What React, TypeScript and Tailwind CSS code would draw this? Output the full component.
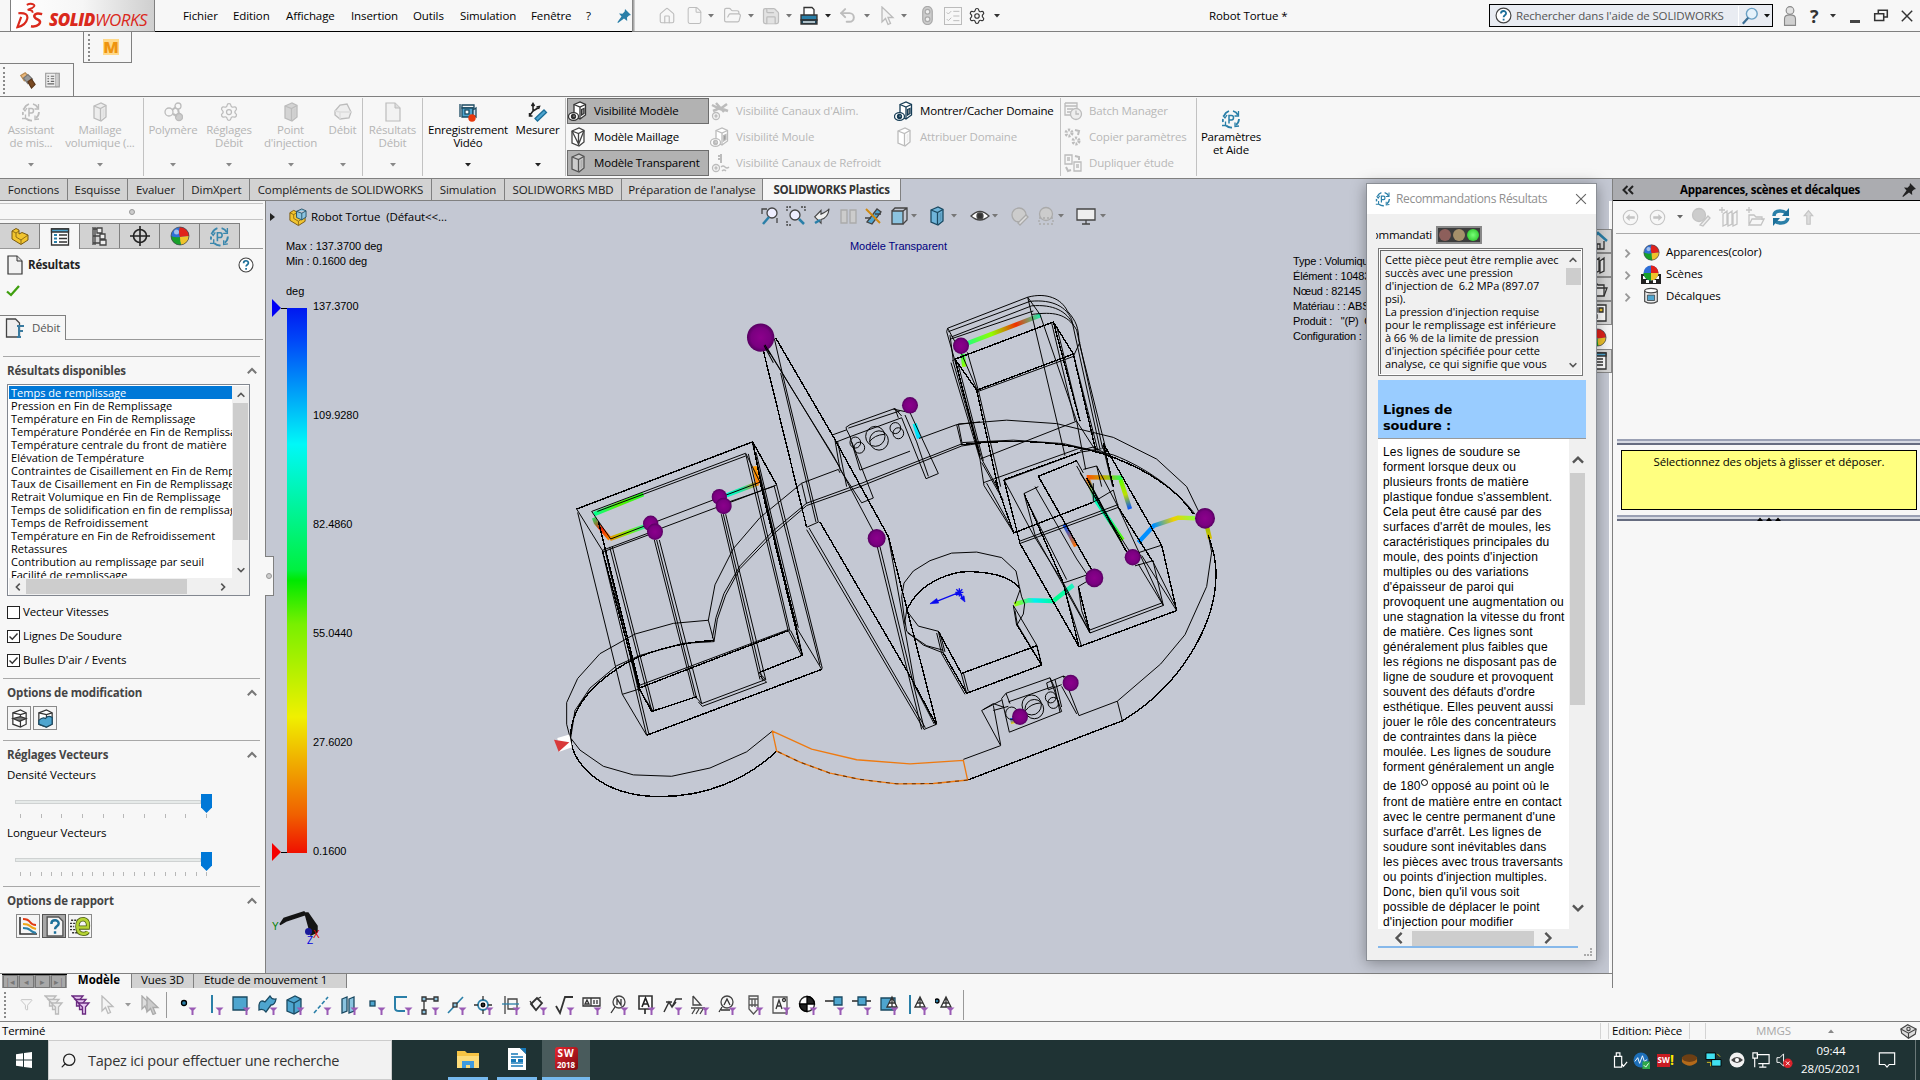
import React from "react";
import { Home, File, FolderOpen, Save, Undo2, MousePointer2, Settings, Search, ListChecks, Filter } from "lucide-react";

type P = { children?: React.ReactNode; className?: string };

/* ---------- small drawing helpers ---------- */
const Ic = ({ children, className = "" }: P) => (
  <svg viewBox="0 0 20 20" className={"shrink-0 " + (/size-|w-\[/.test(className) ? "" : "size-5 ") + className} fill="none" stroke="currentColor" strokeWidth="1.3">
    {children}
  </svg>
);
const Caret = ({ className = "text-[#444]" }: P) => (
  <svg viewBox="0 0 6 4" className={"w-[6px] h-[4px] shrink-0 " + className}>
    <path d="M0 0h6L3 3.6z" fill="currentColor" />
  </svg>
);
const Chev = ({ className = "" }: P) => (
  <svg viewBox="0 0 10 10" className={"shrink-0 " + (/size-/.test(className) ? "" : "size-[10px] ") + className} fill="none" stroke="currentColor" strokeWidth="2">
    <path d="M0.8 7.2 5 3l4.2 4.2" />
  </svg>
);
const Ball = ({ className = "size-[18px]" }: P) => (
  <svg viewBox="0 0 20 20" className={"shrink-0 " + className}>
    <circle cx="10" cy="10" r="9" fill="#2f6fd6" />
    <path d="M10 1q-2 5 0 10l9-1a9 9 0 0 0-9-9z" fill="#e0221b" />
    <path d="M19 10a9 9 0 0 1-8 9q-2-4-1-8z" fill="#efc32b" />
    <path d="M1 10q4 2 9 1 0 4 1 8A9 9 0 0 1 1 10z" fill="#18a02a" />
    <circle cx="6.5" cy="6" r="2.5" fill="#fff" opacity=".55" />
    <circle cx="10" cy="10" r="9" fill="none" stroke="#444" strokeWidth=".7" />
  </svg>
);
const CycleP = ({ className = "size-[18px] text-[#2a7fa8]" }: P) => (
  <Ic className={className}>
    <path d="M3 7a8 8 0 0 1 5-5M12 2a8 8 0 0 1 5 4M18 10a8 8 0 0 1-3 6M11 18.500a8 8 0 0 1-6-2M2 13a8 8 0 0 1 0-3" strokeWidth="1.8" />
    <path d="M17.500 2v5h-4M2 6.500 4 9l2-3M18 17l-4 .5V13.500M4.500 12.500v4l-3.500 0" strokeWidth="1.3" />
    <path d="M8 14.500v-8h2.500q2 0 2 2.200t-2 2.200H8" strokeWidth="1.5" />
  </Ic>
);
const Cube = ({ className = "size-[18px] text-[#333]", fill = "#fff" }: P & { fill?: string }) => (
  <Ic className={className}>
    <path d="M4 4 11 1 16 3.500v11.500l-5 4L4 16z" fill={fill} />
    <path d="M4 4l6.500 2.500L16 3.500M10.500 6.500v12" />
    <path d="M12.500 7.500l2-1.200v8l-2 1.700z" fill="currentColor" opacity=".25" stroke="none" />
  </Ic>
);
const MeshCube = ({ className = "size-[20px] text-[#333]" }: P) => (
  <Ic className={className}>
    <path d="M4 4 11 1 16 3.500v11.500l-5 4L4 16z" fill="#fff" />
    <path d="M4 4l6.500 2.500L16 3.500M10.500 6.500v12M4 4l6.500 13M16 3.500l-5.500 14" />
  </Ic>
);
const CubeEye = ({ className = "size-[20px] text-[#333]", fill = "#fff" }: P & { fill?: string }) => (
  <Ic className={className}>
    <path d="M6 3.500 12 1l5.500 2.500V14L12 18 6 15z" fill={fill} />
    <path d="M6 3.500l6 2.500 5.500-2.500M12 6v12" />
    <path d="M13.500 8.500 16 7.500v5l-2.500 1.500z" fill="#999" />
    <ellipse cx="5.500" cy="15.500" rx="5" ry="3.800" fill="#fff" />
    <circle cx="5.500" cy="15.500" r="2" fill="currentColor" />
    <circle cx="6" cy="15" r=".6" fill="#fff" stroke="none" />
  </Ic>
);
const GearI = ({ className = "size-[20px]" }: P) => <Settings className={"shrink-0 " + className} strokeWidth={1.5} />;
const HelpI = ({ className = "size-[16px]" }: P) => (
  <svg viewBox="0 0 16 16" className={"shrink-0 " + className}>
    <circle cx="8" cy="8" r="7" fill="#fff" stroke="#444" strokeWidth="1.1" />
    <path d="M5.600 6.200c0-3.200 4.800-3.200 4.800-.2 0 1.800-2.300 1.700-2.300 3.600M8.100 11v1.700" fill="none" stroke="#1c6f99" strokeWidth="1.7" />
  </svg>
);
const Part = ({ className = "size-[20px]", blue }: P & { blue?: boolean }) => (
  <svg viewBox="0 0 20 20" className={"shrink-0 " + className}>
    <path d="M2 5 6 2.500 9 4v4l3-1.500L18 9v5l-7 4.500L2 13z" fill="#f2c52f" stroke="#7a5a10" strokeWidth="1" />
    <path d="M2 5l4 2v4l5 3 7-5M11 14v4M6 7l3-2" fill="none" stroke="#7a5a10" strokeWidth=".8" />
    {blue && <path d="M9 3.500 14.500 1 19 3v6.500l-4.500 3L9 10zM9 3.500l5.500 2L19 3M14.500 5.500v7" fill="#8cc4e0" stroke="#1b4a62" strokeWidth=".9" />}
  </svg>
);
const Page = ({ className = "size-[20px]" }: P) => (
  <svg viewBox="0 0 20 20" className={"shrink-0 " + className}>
    <path d="M3 1h9l5 5v13H3z" fill="#f2f2f2" stroke="currentColor" strokeWidth="1.200" />
    <path d="M12 1v5h5" fill="#ddd" stroke="currentColor" />
  </svg>
);
const Pin = ({ className = "" }: P) => (
  <svg viewBox="0 0 14 14" className={"size-[14px] shrink-0 " + className}>
    <path d="M8 0l6 6-2 .4-2 2.200.2 3.400L7 9.500 1 14l-.6-.8L4.500 7.500 2 4.500l3.500.2L7.700 2.500z" fill="currentColor" />
  </svg>
);

/* ---------- title bar ---------- */
const menus: [string, string][] = [
  ["Fichier", "w-[50px]"], ["Edition", "w-[53px]"], ["Affichage", "w-[65px]"], ["Insertion", "w-[62px]"],
  ["Outils", "w-[47px]"], ["Simulation", "w-[71px]"], ["Fenêtre", "w-[55px]"], ["?", "w-[31px]"],
];
function TitleBar() {
  return (
    <div className="h-[32px] flex shrink-0 border-b border-[#808080]">
      <div className="w-[10px] h-[32px] border-b border-[#808080]" />
      <div className="w-[145px] h-[32px] border-x border-b border-[#808080] bg-linear-to-r from-white via-[#f6f6f6] to-[#cfcfcf] flex items-center pl-[5px]">
        <svg viewBox="0 0 30 30" className="w-[29px] h-[28px]" fill="none" stroke="#da291c" strokeWidth="2.300">
          <path d="M11 3q4-2 7-.5t-1.500 4L12 8.500q6 0 5 3" strokeWidth="2" />
          <path d="M2 12q11-1 9.500 6Q10 25 1 27l4-11" />
          <path d="M27.500 13q-8-2-8.500 2 0 2 4 4t1 5q-3 3-8.500 2" strokeWidth="2.700" />
        </svg>
        <span className="ml-[4px] text-[17px] leading-none italic text-[#da291c] font-['Open_Sans',sans-serif] tracking-[-0.500px] mt-[8px]">
          <b className="font-extrabold">SOLID</b>WORKS
        </span>
      </div>
      <div className="w-[477px] h-[32px] flex items-center pl-[28px] border-b border-black">
        {menus.map(([m, w]) => <span key={m} className={w}>{m}</span>)}
        <Pin className="text-[#2a7fa8]" />
      </div>
      <div className="w-[3px] bg-linear-to-r from-[#777] to-[#ddd]" />
      <div className="flex items-center text-[#bdbdbd] pl-[23px]">
        <span className="w-[27px]"><Home className="size-[18px]" strokeWidth={1.500} /></span>
        <span className="w-[23px]"><File className="size-[19px]" strokeWidth={1.300} /></span>
        <span className="w-[15px]"><Caret className="text-[#777]" /></span>
        <span className="w-[25px]"><FolderOpen className="size-[19px]" strokeWidth={1.500} /></span>
        <span className="w-[13px]"><Caret className="text-[#777]" /></span>
        <span className="w-[25px]"><Save className="size-[20px] fill-[#e2e2e2]" strokeWidth={1.500} /></span>
        <span className="w-[13px]"><Caret className="text-[#777]" /></span>
        <span className="w-[26px]">
          <Ic className="size-[20px] text-[#333]">
            <path d="M5 9V1.500h8l2 2V9" fill="#fff" />
            <path d="M2 9h16v5H2z" fill="#2a7fa8" />
            <path d="M2 14h16v4H2z" fill="#1b4a62" />
            <path d="M4 16h12" stroke="#fff" />
          </Ic>
        </span>
        <span className="w-[13px]"><Caret className="text-[#222]" /></span>
        <span className="w-[26px]"><Undo2 className="size-[19px]" strokeWidth={2.500} /></span>
        <span className="w-[13px]"><Caret className="text-[#777]" /></span>
        <span className="w-[24px]">
          <Ic className="size-[20px] text-[#bbb]"><path d="M5 1v15l3.500-3.500 2.500 6 2.500-1-2.500-6H16z" fill="#f4f4f4" /></Ic>
        </span>
        <span className="w-[17px]"><Caret className="text-[#777]" /></span>
        <span className="w-[26px]">
          <Ic className="size-[19px] text-[#aaa]"><rect x="5" y="0.500" width="10" height="19" rx="5" fill="#ccc" /><circle cx="10" cy="6" r="2.500" fill="#eee" /><circle cx="10" cy="14" r="2.500" fill="#eee" /></Ic>
        </span>
        <span className="w-[24px]"><ListChecks className="size-[18px] border border-[#bbb]" strokeWidth={1.500} /></span>
        <span className="w-[26px]"><GearI className="size-[18px] text-[#333]" /></span>
        <Caret className="text-[#333]" />
      </div>
      <div className="ml-auto flex items-center">
        <span className="w-[280px]">Robot Tortue *</span>
        <div className="w-[284px] h-[23px] border border-black bg-[#e9ecf2] flex items-center pl-[5px] text-[#555]">
          <HelpI className="size-[17px]" />
          <span className="ml-[4px] w-[222px] tracking-[-0.160px]">Rechercher dans l'aide de SOLIDWORKS</span>
          <div className="h-[20px] w-px bg-white" />
          <Ic className="size-[18px] ml-[2px] text-[#666]"><circle cx="12" cy="7.500" r="6" fill="#e6f2fb" stroke="#6aa0c4" strokeWidth="1.600" /><path d="M8 12l-6 6.500" stroke="#3c6e94" strokeWidth="2.500" /></Ic>
          <Caret className="ml-[5px] text-[#111]" />
        </div>
        <Ic className="size-[22px] ml-[6px] text-[#888]"><circle cx="10" cy="5" r="3.500" fill="#e2e2e2" strokeWidth="1" /><path d="M5 18.500v-6q0-3.500 5-3.500t5 3.500v6z" fill="#d0d0d0" strokeWidth="1" /></Ic>
        <b className="ml-[9px] w-[20px] text-[18px] text-[#333] leading-none">?</b>
        <Caret className="text-[#333]" />
        <div className="ml-[14px] mt-[12px] w-[10px] h-[3px] bg-[#444]" />
        <Ic className="size-[18px] ml-[12px] text-[#333]"><path d="M7 7V3.500h10V11h-4M3 7.500h10V15H3z" strokeWidth="1.700" /></Ic>
        <Ic className="size-[16px] ml-[9px] mr-[5px] text-[#333]"><path d="M3.500 3.500l13 13M16.500 3.500l-13 13" strokeWidth="1.800" /></Ic>
      </div>
    </div>
  );
}
const Grip = ({ className = "" }: P) => (
  <div className={"w-[3px] border-l-2 border-dotted border-[#8a8a8a] shrink-0 " + className} />
);
function ExtraBars() {
  return (
    <>
      <div className="h-[32px] pl-[83px] flex shrink-0">
        <div className="w-[49px] h-[31px] border border-t-0 border-[#808080] flex items-center pl-[4px]">
          <Grip className="h-[27px]" />
          <div className="ml-[12px] size-[16px] bg-[#ffd98a] text-[#ee9410] font-extrabold text-[16px] leading-[16px] text-center">M</div>
        </div>
      </div>
      <div className="h-[33px] flex shrink-0 border-b border-[#808080]">
        <div className="w-[74px] h-[33px] -mt-px border-t border-r border-[#808080] flex items-center pl-[3px]">
          <Grip className="h-[27px]" />
          <Ic className="size-[18px] ml-[12px]"><path d="M3 5l5-3 4 4-5 5z" fill="#e8b67a" stroke="#b98a50" /><path d="M6 8l5-4 5 5-5 5z" fill="#9a9a9a" stroke="#777" /><path d="M11 12l4-3 4 6-4 4z" fill="#7a4a22" stroke="#5a3618" /></Ic>
          <Ic className="size-[17px] ml-[8px] text-[#999]"><path d="M2 1.500h12v16H2z" fill="#eee" /><path d="M14 1.500h4v16h-4" fill="#ccc" /><path d="M4 5h2M8 5h4M4 8h2M8 8h4M4 11h2M8 11h4M4 14h8" stroke="#666" /></Ic>
        </div>
      </div>
    </>
  );
}

/* ---------- ribbon ---------- */
function BigBtn({ w, icon, a, b, dim = true, caret = true }: { w: string; icon: React.ReactNode; a: string; b?: string; dim?: boolean; caret?: boolean }) {
  return (
    <div className={"flex flex-col items-center shrink-0 tracking-[-0.200px] " + w + (dim ? " text-[#b5b5b5]" : " text-black")}>
      <div className="h-[20px] mt-[5px] flex items-center">{icon}</div>
      <div className="h-[13px] mt-[1px] leading-[13px]">{a}</div>
      <div className="h-[13px] leading-[13px]">{b}</div>
      {caret && <Caret className={"mt-[14px] " + (dim ? "text-[#888]" : "text-[#222]")} />}
    </div>
  );
}
function Row({ icon, t, mode = "dim" }: { icon: React.ReactNode; t: string; mode?: "dim" | "on" | "off" }) {
  return (
    <div className={"h-[26px] flex items-center gap-[6px] border tracking-[-0.180px] " + (mode === "on" ? "bg-[#b2b2b2] border-[#6d6d6d] text-black" : mode === "off" ? "border-transparent text-black" : "border-transparent text-[#b8b8b8]")}>
      {icon}<span>{t}</span>
    </div>
  );
}
const Sep = () => <div className="w-px h-[78px] bg-[#c2c2c2] mt-px shrink-0" />;
const dimI = "size-[20px] text-[#bcbcbc]";
function Ribbon() {
  return (
    <div className="h-[82px] shrink-0 flex border-b border-[#808080]">
      <BigBtn w="w-[62px]" icon={<CycleP className="size-[20px] text-[#bcbcbc]" />} a="Assistant" b="de mis..." />
      <BigBtn w="w-[76px]" icon={<Cube className={dimI} fill="#ededed" />} a="Maillage" b="volumique (..." />
      <div className="w-[5px]" /><Sep />
      <BigBtn w="w-[58px]" icon={<Ic className={dimI}><circle cx="6" cy="10" r="4" /><circle cx="15" cy="4" r="3" /><circle cx="16" cy="15" r="3.500" fill="#ccc" /><path d="M9 8l4-3M10 12l4 2M15 7l1 5" strokeWidth="2" /></Ic>} a="Polymère" />
      <BigBtn w="w-[54px]" icon={<GearI className={dimI} />} a="Réglages" b="Débit" />
      <BigBtn w="w-[69px]" icon={<Cube className={dimI} fill="#d4d4d4" />} a="Point" b="d'injection" />
      <BigBtn w="w-[35px]" icon={<Ic className={dimI}><path d="M2 9 7 3l7-1 4 8-2 6-9 1-5-4z" fill="#eee" /><path d="M2 9l5 1 11 0M7 10v7" stroke="#ddd" /></Ic>} a="Débit" />
      <div className="w-[2px]" /><Sep />
      <BigBtn w="w-[59px]" icon={<Page className="size-[20px] text-[#bcbcbc]" />} a="Résultats" b="Débit" />
      <Sep />
      <BigBtn w="w-[90px]" dim={false} icon={<Ic className="size-[20px] text-[#1b4a62]"><path d="M2 2v13M4 3h12v3H4z" /><path d="M4 6h11v9H4z" fill="#4ea5cf" /><path d="M15 8l3-2v9l-3-2z" fill="#cde" /><rect x="7" y="8" width="4" height="4" fill="#fff" /><circle cx="14" cy="16" r="3.700" fill="#e8390e" stroke="none" /></Ic>} a="Enregistrement" b="Vidéo" />
      <BigBtn w="w-[49px]" dim={false} icon={<Ic className="size-[20px] text-[#222]"><path d="M5 9V2.500M5 9l5-3M5 9l-3 4M3.500 4 5 1.500 6.500 4M8.500 5l3-.5-1 2.500M1.500 11v3h3" strokeWidth="1.500" /><path d="M7 16.500 16 8l2.500 2.500-9 8.500z" fill="#4ea5cf" stroke="#1c6f99" /></Ic>} a="Mesurer" />
      <div className="w-[3px]" /><Sep />
      <div className="w-[142px] ml-px mt-px">
        <Row mode="on" icon={<CubeEye />} t="Visibilité Modèle" />
        <Row mode="off" icon={<MeshCube className="size-[20px] text-[#444]" />} t="Modèle Maillage" />
        <Row mode="on" icon={<Cube className="size-[20px] text-[#555]" fill="#ccc" />} t="Modèle Transparent" />
      </div>
      <div className="w-[184px] mt-px">
        <Row icon={<Ic className={dimI}><path d="M2 4l8 4 7-5M3 10l7-3 8 3M6 2l8 9" strokeWidth="2.500" /><circle cx="6" cy="15" r="3.500" /><circle cx="6" cy="15" r="1" /></Ic>} t="Visibilité Canaux d'Alim." />
        <Row icon={<CubeEye className={dimI} />} t="Visibilité Moule" />
        <Row icon={<Ic className={dimI}><path d="M11 1v9M8 3h3M8 6h3" strokeWidth="2" /><circle cx="6" cy="15" r="3.500" /><circle cx="6" cy="15" r="1" /><path d="M11 14q2-2 4 0t4 0M12 18q2-2 4 0" /></Ic>} t="Visibilité Canaux de Refroidt" />
      </div>
      <div className="w-[167px] mt-px tracking-[-0.350px]">
        <Row mode="off" icon={<CubeEye className="size-[20px] text-[#173d56]" />} t="Montrer/Cacher Domaine" />
        <Row icon={<Cube className={dimI} />} t="Attribuer Domaine" />
      </div>
      <Sep />
      <div className="w-[134px] ml-px mt-px">
        <Row icon={<Ic className={dimI}><path d="M2 2h12v5M2 2v12h6M2 5h12M4 8h6M4 11h4" /><circle cx="13" cy="13" r="5.500" fill="#eee" /><path d="M13 9.500V13h3" /></Ic>} t="Batch Manager" />
        <Row icon={<Ic className={dimI}><circle cx="6" cy="6" r="3" strokeWidth="3" strokeDasharray="2 1.200" /><circle cx="13" cy="14" r="3" strokeWidth="3" strokeDasharray="2 1.200" /><path d="M12 3l4 1-1 4" strokeWidth="2" /></Ic>} t="Copier paramètres" />
        <Row icon={<Ic className={dimI}><path d="M2 2h7v9H2zM11 9h7v9h-7zM4 5h3M4 7h3M13 12h3M13 14h3" /><path d="M12 3l4 1 0 3M3 14l2 4 3-1" strokeWidth="2" /></Ic>} t="Dupliquer étude" />
      </div>
      <Sep />
      <div className="mt-[7px]"><BigBtn w="w-[68px]" dim={false} caret={false} icon={<CycleP className="size-[20px] text-[#2a7fa8]" />} a="Paramètres" b="et Aide" /></div>
    </div>
  );
}
const tabs: [string, string][] = [
  ["Fonctions", "w-[68px]"], ["Esquisse", "w-[60px]"], ["Evaluer", "w-[56px]"], ["DimXpert", "w-[66px]"],
  ["Compléments de SOLIDWORKS", "w-[182px]"], ["Simulation", "w-[73px]"], ["SOLIDWORKS MBD", "w-[117px]"], ["Préparation de l'analyse", "w-[141px]"],
];
function TabRow() {
  return (
    <div className="relative h-[22px] flex shrink-0">
      {tabs.map(([t, w]) => (
        <div key={t} className={"h-[22px] leading-[21px] text-center bg-[#d2d2d2] border-r border-b border-[#808080] text-[#1a1a1a] tracking-[-0.060px] " + w}>{t}</div>
      ))}
      <div className="w-[138px] h-[22px] leading-[21px] text-center bg-[#f7f7f7] border-r border-b border-[#808080] font-bold text-[#333] tracking-[-0.350px]">SOLIDWORKS Plastics</div>
    </div>
  );
}

/* ---------- property manager ---------- */
const results = [
  "Temps de remplissage", "Pression en Fin de Remplissage", "Température en Fin de Remplissage", "Température Pondérée en Fin de Remplissage",
  "Température centrale du front de matière", "Elévation de Température", "Contraintes de Cisaillement en Fin de Remplissage",
  "Taux de Cisaillement en Fin de Remplissage", "Retrait Volumique en Fin de Remplissage", "Temps de solidification en fin de remplissage",
  "Temps de Refroidissement", "Température en Fin de Refroidissement", "Retassures", "Contribution au remplissage par seuil", "Facilité de remplissage",
];
const Head = ({ children }: P) => (
  <div className="h-[16px] flex items-center justify-between pl-[7px] pr-[8px] font-bold text-[#444] tracking-[-0.150px]">
    <span>{children}</span><Chev className="text-[#777]" />
  </div>
);
const Rule = () => <div className="h-px ml-[3px] w-[257px] bg-[#a8a8a8]" />;
const Check = ({ on, children }: P & { on?: boolean }) => (
  <div className="h-[24px] flex items-center pl-[7px] gap-[3px]">
    <div className="size-[13px] border border-[#222] bg-white">
      {on && <svg viewBox="0 0 11 11" className="size-[11px]"><path d="M1.500 5.500 4.300 8.300 9.500 2.500" fill="none" stroke="#333" strokeWidth="1.400" /></svg>}
    </div>
    {children}
  </div>
);
function Slider({ n }: { n: number }) {
  return (
    <div className="h-[25px]">
      <div className="h-[19px] flex items-center pl-[15px]">
        <div className="w-[186px] h-[4px] border border-[#cfd2d2] bg-[#e6eae9] mb-[3px]" />
        <svg viewBox="0 0 11 19" className="w-[11px] h-[19px]"><path d="M0 0h11v13.500L5.500 19 0 13.500z" fill="#0078d7" /></svg>
      </div>
      <div className="h-[4px] mt-px ml-[20px] w-[187px] flex justify-between">
        {Array.from({ length: n }, (_, i) => <div key={i} className="w-px h-[4px] bg-[#b8b8b8]" />)}
      </div>
    </div>
  );
}
const SmallBtn = ({ children, className = "bg-[#f5f5f5] border-[#8a8a8a]" }: P) => (
  <div className={"size-[24px] border flex items-center justify-center " + className}>{children}</div>
);
function LeftPanel() {
  const pmTabs = [
    <Part className="size-[20px]" />,
    <Ic className="size-[20px] text-[#333]"><path d="M1.500 2h17v16h-17z" fill="#fff" /><path d="M1.500 2h17v3h-17z" fill="#4ea5cf" /><path d="M4 8h3M4 11.500h3M4 15h3" stroke="#2a7fa8" strokeWidth="2" /><path d="M9 8h8M9 11.500h8M9 15h8" /></Ic>,
    <Ic className="size-[20px] text-[#444]"><path d="M3 1v18M3 10h7M3 3h5M3 17h7M5 1v18" /><path d="M7 2h5v5H7zM10 8h5v5h-5zM10 14h6v5h-6z" fill="#eee" /></Ic>,
    <Ic className="size-[20px] text-[#222]"><circle cx="10" cy="10" r="6.500" strokeWidth="1.600" /><path d="M10 0v20M0 10h20" strokeWidth="1.600" /></Ic>,
    <Ball className="size-[20px]" />,
    <CycleP className="size-[21px] text-[#3a87ad]" />,
  ];
  return (
    <div className="relative w-[266px] h-[772px] bg-[#f7f7f7] border-r border-[#808080] shrink-0">
      <div className="h-[2px]" />
      <div className="h-[17px] w-[263px] border-t border-b border-[#c4c4c4] flex justify-center items-center">
        <div className="size-[6px] rounded-full border border-[#999] bg-[#ccc]" />
      </div>
      <div className="flex mt-[3px] w-[263px] border-b border-[#999]">
        {pmTabs.map((t, i) => (
          <div key={i} className={"w-[40px] flex items-center justify-center border-t border-r border-[#808080] " + (i === 1 ? "bg-[#f7f7f7] h-[26px] -mb-px" : "h-[25px] bg-[#d2d2d2]")}>{t}</div>
        ))}
      </div>
      <div className="h-[32px] flex items-center pl-[5px] pr-[11px]">
        <Page className="size-[20px] text-[#333]" />
        <b className="ml-[3px] text-[#222] flex-1 tracking-[-0.200px]">Résultats</b>
        <HelpI className="size-[16px]" />
      </div>
      <div className="h-[34px] pt-[4px] pl-[6px]">
        <svg viewBox="0 0 14 12" className="w-[14px] h-[12px]"><path d="M1 6.500 5 10 13 1" fill="none" stroke="#3f9f0f" strokeWidth="2.300" /></svg>
      </div>
      <div className="flex h-[25px]">
        <div className="w-[66px] border-t border-r border-[#808080] flex items-center pl-[5px] text-[#555]">
          <Ic className="size-[20px] text-[#444]"><path d="M1.500 1h9l4 4v14h-13z" fill="#eee" /><path d="M12 8h7M14 8v11M14 13h4M12 19h4" stroke="#3a7ba0" strokeWidth="2" /></Ic>
          <span className="ml-[7px]">Débit</span>
        </div>
        <div className="w-[197px] border-b border-[#999]" />
      </div>
      <div className="h-[16px]" /><Rule />
      <div className="h-[6px]" />
      <Head>Résultats disponibles</Head>
      <div className="ml-[7px] mt-[5px] w-[243px] h-[212px] border border-[#828790] bg-white flex flex-col pl-px pt-px">
        <div className="flex h-[192px]">
          <div className="w-[223px] overflow-hidden text-[11px] tracking-[0.020px]">
            {results.map((r, i) => (
              <div key={r} className={"h-[13px] leading-[13px] pl-[2px] overflow-hidden " + (i === 0 ? "bg-[#0078d7] text-white" : "")}>{r}</div>
            ))}
          </div>
          <div className="w-[17px] bg-[#f0f0f0] flex flex-col items-center px-px">
            <div className="h-[17px] flex items-center"><Chev className="text-[#555] size-[8px]" /></div>
            <div className="h-[137px] w-full bg-[#cdcdcd]" />
            <div className="h-[22px]" />
            <div className="h-[16px] flex items-center"><Chev className="text-[#555] size-[8px] rotate-180" /></div>
          </div>
        </div>
        <div className="h-[17px] w-[240px] bg-[#f0f0f0] flex items-center">
          <div className="w-[17px] flex justify-center"><Chev className="text-[#555] size-[8px] -rotate-90" /></div>
          <div className="w-[161px] h-[15px] bg-[#cdcdcd]" />
          <div className="w-[27px]" />
          <div className="w-[17px] flex justify-center"><Chev className="text-[#555] size-[8px] rotate-90" /></div>
        </div>
      </div>
      <div className="h-[4px]" />
      <Check>Vecteur Vitesses</Check>
      <Check on>Lignes De Soudure</Check>
      <Check on>Bulles D'air / Events</Check>
      <div className="h-[6px]" /><Rule />
      <div className="h-[6px]" />
      <Head>Options de modification</Head>
      <div className="flex gap-[2px] pl-[7px] mt-[5px] mb-[10px]">
        <SmallBtn><Ic className="size-[19px] text-[#333]"><path d="M3 4l8-3 6 3v12l-6 3-8-3z" fill="#fff" /><path d="M3 4l8 2 6-2M11 6v13" /><path d="M3 10l8-2 6 2-7 3z" fill="#777" /></Ic></SmallBtn>
        <SmallBtn><Ic className="size-[19px] text-[#333]"><path d="M3 4l8-3 6 3v12l-6 3-8-3z" fill="#fff" /><path d="M3 4l8 2 6-2M11 6v13" /><path d="M3 12q4-4 7-2 3-4 7-1v7l-6 3-8-3z" fill="#4ea5cf" stroke="#1b4a62" /></Ic></SmallBtn>
      </div>
      <Rule />
      <div className="h-[6px]" />
      <Head>Réglages Vecteurs</Head>
      <div className="h-[18px] mt-[3px] pl-[7px] leading-[18px]">Densité Vecteurs</div>
      <div className="h-[10px]" /><Slider n={10} />
      <div className="h-[18px] mt-[5px] pl-[7px] leading-[18px]">Longueur Vecteurs</div>
      <div className="h-[10px]" /><Slider n={19} />
      <div className="h-[9px]" /><Rule />
      <div className="h-[6px]" />
      <Head>Options de rapport</Head>
      <div className="flex gap-[2px] pl-[16px] mt-[5px]">
        <SmallBtn><Ic className="size-[20px] text-[#333]"><path d="M2 1v17h17" strokeWidth="1.600" /><path d="M5 3q5 0 7 3t6 3" stroke="#e23a12" strokeWidth="2" /><path d="M5 8q5 0 7 2t6 3" stroke="#f0a818" strokeWidth="2" /><path d="M5 12q5 0 7 2t6 3" stroke="#2a7fa8" strokeWidth="2" /></Ic></SmallBtn>
        <SmallBtn className="bg-[#a8a8a8] border-[#555]"><Ic className="size-[21px] text-[#555]"><path d="M3 1h11l4 4v14H3z" fill="#f4f4f4" /><path d="M7 7.500c0-4.500 7-4.500 7-.3 0 2.800-3.500 2.500-3.500 5.300M10.500 14.500v2.500" stroke="#1c6f99" strokeWidth="2.300" /></Ic></SmallBtn>
        <SmallBtn><Ic className="size-[21px]"><path d="M1 4h5M0 7h5M0 10h4M0 13h5M2 16h5" stroke="#333" strokeDasharray="2 1" /><path d="M7 11h10q1-7-4-8-6 0-6 7 0 7 6 7 3 0 4-2" stroke="#4a5a10" strokeWidth="4" /><path d="M7 11h10q1-7-4-8-6 0-6 7 0 7 6 7 3 0 4-2" stroke="#b5d334" strokeWidth="2.500" /></Ic></SmallBtn>
      </div>
    </div>
  );
}

/* ---------- 3D model ---------- */
const blackA = `
M110 665L638 470L710 595L187 785ZM155 672L617 503L660 587L212 752ZM172 672L617 511M187 790L345 733M565 645L705 598
M113 675L247 1203L320 1322M187 787L320 1322M195 785L327 1320M217 775L342 1250M209 775L335 1250M638 475L787 1088M648 500L775 1010M617 505L745 1020M625 505L750 1020M710 595L847 1128M703 600L840 1118M663 590L780 1060
M247 1203L297 1188M745 1018L785 1090M752 1018L787 1085M770 1010L845 1130M290 1180L745 1015M297 1188L340 1253M657 1140L677 1160L485 1230L465 1208M660 1150L680 1168L487 1238L475 1225
M343 755L463 1210M350 755L470 1215M358 755L485 1230M544 680L660 1160M550 680L668 1165M557 680L677 1160
M675 190L880 510L1000 730M680 195L900 545M835 703L728 275L703 170M828 703L722 270M800 718L835 703M800 725L1152 1305M807 720L1156 1300M1152 1305L1190 1290L1185 1270M1012 775L1145 1305M1020 775L1152 1300
M1045 745L1125 1180L1183 1290M877 450L920 435L918 428L930 420L1065 373L1085 395M930 455L1085 400M920 435L932 458M1110 497L960 552L930 455M890 470L930 455M885 465L900 550L965 647L1000 633L935 470M893 470L920 600M1065 373L1075 400M1060 375L1110 385L1195 562L1158 577L1085 400M1095 392L1130 470L1165 570M925 430L1080 380
M505 988L525 885L580 780L660 690L785 590L895 550M1137 460L1250 420L1320 412M522 1050L532 985L557 915L600 838L700 738L800 655L960 600L1265 482L1320 474M517 1040L528 980L552 910L600 830L700 728L800 648L960 592L1265 476M785 590L800 650M895 550L900 560M1250 420L1265 480
M505 988L400 997L285 1028L180 1085L113 1157L80 1227L80 1290L92 1335M505 988L522 1050L430 1055L300 1090L230 1120L150 1185L105 1250L92 1330L120 1365L190 1412L280 1437L395 1441L510 1417L620 1370L697 1310`;
const thickA = `M187 785L297 1185L335 1253L470 1210M175 700L300 1185M638 470L665 600L770 1010M660 587L787 1090L657 1140M110 665L638 470M320 1322L847 1130M297 1185L745 1018
M670 205L800 718M707 168L880 455L1045 745L1190 1290M840 703L1110 1150L1188 1290M522 1047C430 1050 300 1080 230 1130C130 1195 90 1260 92 1330C95 1400 180 1500 360 1500C500 1500 620 1450 710 1368M638 470L710 595`;
const blackB = `
M203 140L443 50C500 35 545 55 562 90C590 120 595 140 597 175L668 490M205 150L450 62C520 55 560 80 575 115L660 490M215 165L455 75C520 70 560 90 580 130M210 172L460 90M455 100C520 92 560 96 590 145L600 190L680 500M203 140L200 150L225 235L305 520L357 612M203 140L245 215M210 160L220 235M213 240L300 520M233 240L310 525M218 232L297 500
M443 50L555 510M443 50L480 100L590 410L617 550M515 125L585 410M530 135L600 410M290 325L580 222L600 180M245 215L292 320M262 210L295 320M295 320L362 600M580 215L655 500M300 520L590 410L650 500M300 520L312 597L400 732M312 588L600 488M320 590L400 730M305 530L370 640M370 583L600 500L665 490M600 495L640 485L690 510
M420 765L715 660L850 945L630 1025M420 758L715 652M475 570L610 800L640 850M465 600L590 810L625 860M432 620L475 600M432 620L465 740L630 1025M372 580L460 740L550 880M440 640L560 870M550 880L640 850M550 880L560 920L605 1065M595 890L630 870M595 890L605 960L630 1025M550 880L595 960L630 1025M610 550L650 540L715 660M640 645L700 610M640 590V645M650 540L665 600M590 540L740 790M600 560L750 790M625 580L735 780M700 610L715 660L820 820L850 945M668 480L698 600M765 795L845 770M765 830L820 815M775 825L850 945M785 800L890 960M820 820L890 955M625 1018L845 938M590 525L610 560
M235 418L380 407L530 417L700 457L830 520L920 600L960 680M235 418L247 478M247 472L400 465L550 475L700 508C800 545 890 610 945 680M712 1223L842 1115L915 1030L980 890L995 790L985 740M712 1223L727 1280M597 1265L712 1223M250 1392L362 1352
M75 1000L65 920L72 880L100 845L150 815L215 793L290 790L365 806L408 845L418 890L425 920L434 940L430 970L410 1003M80 960L75 990L80 1020L130 1060L190 1083M83 1025L140 1062L190 1075M80 960L115 1005L175 1020L190 1083L260 1200M243 1140L260 1200M250 1140L265 1195M170 1025L185 1085L255 1203M400 945L470 1060L485 1118M405 960L412 1000L480 1110M400 945L410 1003M420 900L405 940M180 1025L195 1080
M305 1250L362 1352M305 1250L365 1220M340 1235L362 1350M310 1247L340 1230L370 1240M340 1250L385 1238M365 1215L378 1200L510 1155L545 1253L388 1313L365 1215M385 1225L520 1180M378 1200L390 1230M510 1155L525 1185L540 1255M500 1170L550 1150L597 1265M550 1150L572 1160M545 1180L590 1260M500 1170L505 1190L545 1175M525 1160L545 1240`;
const thickB = `M225 230L520 122L580 215L290 320ZM290 320L357 615M225 230L300 515M520 122L600 410M580 215L648 498M372 580L420 765L597 1065L890 960L845 770L670 475L700 600M400 735L640 645M475 570L590 525M475 570L640 850M372 580L600 500M620 575L740 790M432 620L550 880L597 1065M595 890L630 1025M715 660L820 820
M80 960C120 870 230 840 290 848C350 850 400 870 420 895M190 1083L260 1200L485 1118L470 1060M243 1143L470 1062M175 1020L243 1140M410 1000L485 1118M263 1452L727 1280C900 1180 1010 1000 1008 850C1008 790 985 750 985 740M247 478C450 455 600 480 700 515C820 560 900 620 940 680M345 580L400 732`;
const spheres: [number, number, number][] = [
  [662, 167, 41], [332, 707, 23], [345, 731, 24], [538, 630, 23], [551, 656, 24], [1110, 364, 24], [1263, 191, 24], [1010, 750, 27],
  [1592, 1170, 24], [1440, 1268, 24], [1995, 692, 30], [1778, 805, 24], [1663, 865, 27],
];
const strips: [string, string[], number, number, number, number][] = [
  ["M162 680L310 622", ["#00ff90", "#58f000", "#20ff20"], 162, 680, 310, 622],
  ["M162 690L168 705L210 752", ["#30d060", "#f02000", "#ff8800"], 162, 690, 210, 752],
  ["M210 752L318 714", ["#f09000", "#80f000", "#20f0a0"], 210, 752, 318, 714],
  ["M560 625L655 590", ["#00ffd0", "#20e8a0", "#f08000"], 560, 625, 655, 590],
  ["M643 541L655 592", ["#ff9a00", "#ff8000"], 643, 541, 655, 592],
  ["M1124 417L1137 460", ["#00f0f0", "#00d8ff"], 1124, 417, 1137, 460],
  ["M1268 215L1273 252", ["#30ff50", "#90ff00"], 1268, 215, 1273, 252],
  ["M1280 185L1502 102", ["#20ff80", "#90ff00", "#f03000", "#20f0b0"], 1280, 185, 1502, 102],
  ["M1640 573L1748 574", ["#ff5000", "#c0b000", "#20ff60"], 1640, 573, 1748, 573.5],
  ["M1742 580L1770 665", ["#60ff00", "#c0e000", "#0050ff"], 1742, 580, 1770, 665],
  ["M1642 575L1668 640L1748 755", ["#f06000", "#00ffc0", "#00ff90", "#60ff00"], 1642, 575, 1748, 755],
  ["M1573 710L1608 773", ["#0050ff", "#ff7000"], 1573, 710, 1608, 773],
  ["M1795 762L1842 713L1915 690L1965 692", ["#0090ff", "#0090ff", "#f0d000", "#90ff40"], 1795, 762, 1965, 692],
  ["M2000 712L2010 752", ["#90c000", "#e0c000"], 2000, 712, 2010, 752],
  ["M1423 942L1465 930L1540 932L1600 886", ["#a0ff00", "#00f0f0", "#00ff90", "#20f0c0"], 1423, 942, 1600, 886],
  ["M1416 1272L1420 1288", ["#0040ff", "#f0d000"], 1416, 1272, 1420, 1288],
];
function Model() {
  return (
    <svg viewBox="0 0 1343 794" className="absolute left-[266px] top-0 w-[1343px] h-[794px]" fill="none">
      <defs>
        <radialGradient id="sph" cx=".5" cy=".5" r=".5"><stop offset="0" stopColor="#8c008c" /><stop offset=".7" stopColor="#7a0080" /><stop offset="1" stopColor="#560060" /></radialGradient>
        {strips.map(([, c, x1, y1, x2, y2], i) => (
          <linearGradient key={i} id={"st" + i} gradientUnits="userSpaceOnUse" x1={x1} y1={y1} x2={x2} y2={y2}>
            {c.map((k, j) => <stop key={j} offset={j / (c.length - 1)} stopColor={k} />)}
          </linearGradient>
        ))}
      </defs>
      <g transform="translate(274 101) scale(.33333 .34439)" strokeLinejoin="round">
        {strips.map(([d], i) => <path key={i} d={d} stroke={"url(#st" + i + ")"} strokeWidth="13" />)}
        <g shapeRendering="crispEdges" stroke="#000">
          <path d={blackA} strokeWidth="2.900" />
          <path d={thickA} strokeWidth="4.200" />
          <g transform="translate(1020 0)"><path d={blackB} strokeWidth="2.900" /><path d={thickB} strokeWidth="4.200" /></g>
          <g strokeWidth="2.900">
            <circle cx="1006" cy="454" r="29" /><circle cx="1017" cy="466" r="28" /><path d="M988 470q15-20 45-22" />
            <circle cx="946" cy="472" r="16" /><circle cx="958" cy="487" r="16" /><circle cx="1066" cy="430" r="16" /><circle cx="1075" cy="445" r="16" />
            <circle cx="1475" cy="1234" r="29" /><circle cx="1483" cy="1246" r="28" /><path d="M1457 1250q15-20 45-22" />
            <circle cx="1415" cy="1258" r="18" /><circle cx="1532" cy="1212" r="16" /><circle cx="1540" cy="1228" r="16" />
          </g>
        </g>
        <path d="M697 1310L815 1362L950 1393L1110 1405L1270 1395L1283 1452L1180 1462L1070 1463L960 1450L870 1432L780 1400L710 1368Z" stroke="#ee7a10" strokeWidth="4" />
        <path d="M1283 1452L1180 1462L1070 1463L960 1450L870 1432L780 1400L710 1368" stroke="#6a3000" strokeWidth="3" strokeDasharray="12 14" />
        {spheres.map(([x, y, r], i) => <circle key={i} cx={x} cy={y} r={r} fill="url(#sph)" />)}
        <path d="M672 190L700 240M675 188L690 215" stroke="#000" strokeWidth="3" />
        <g stroke="#0a0aee" strokeWidth="4"><path d="M1258 907L1190 933M1258 907L1268 925M1246 907H1270M1258 895V919M1249 898L1267 916M1267 898L1249 916" /><path d="M1170 940L1190 925L1196 938ZM1275 935L1261 924L1272 917Z" fill="#0a0aee" strokeWidth="2" /></g>
        <path d="M52 1330L88 1320L96 1357L58 1370Z" fill="#fff" /><path d="M42 1335L88 1342L56 1370Z" fill="#d83a3a" />
      </g>
      <path d="M39.500 735.500L20 742L14 745.500L18 739.500L38 733ZM39 734L42 734L51 747V753L45 756Z" fill="#141414" stroke="#141414" strokeWidth="1.500" />
      <circle cx="42.500" cy="752.500" r="3.500" fill="#1a1a9a" />
    </svg>
  );
}
const legend = ["137.3700", "109.9280", "82.4860", "55.0440", "27.6020", "0.1600"];
const hud: [React.ReactNode, string][] = [
  [<Ic><circle cx="12" cy="7" r="5" fill="#eef" /><path d="M9 11l-6 7" strokeWidth="2.500" stroke="#2a7fa8" /><path d="M2 8V3h5M17 12v5" /></Ic>, "w-[26px]"],
  [<Ic><circle cx="9" cy="9" r="5" fill="#eef" /><path d="M13 13l5 5" strokeWidth="2.500" stroke="#2a7fa8" /><path d="M1 5V1h4M19 5V1h-4M1 15v4h4" strokeDasharray="2 1" /></Ic>, "w-[26px]"],
  [<Ic><path d="M3 12 10 5v4q7-3 9-6-1 10-9 12v4z" fill="#eee" transform="scale(.9)" /><path d="M3 17l5-3" stroke="#2a7fa8" strokeWidth="2.500" /></Ic>, "w-[26px]"],
  [<Ic className="size-5 text-[#aaa]"><path d="M3 4h6v13H3zM12 4h6v13h-6z" fill="#ccc" /></Ic>, "w-[25px]"],
  [<Ic><path d="M4 16 14 3l4 3L9 18z" fill="#4ea5cf" /><path d="M3 3l14 14" stroke="#d08a10" strokeWidth="2" /><path d="M2 12h6M12 8h6" /></Ic>, "w-[26px]"],
  [<Ic><path d="M3 5h11v13H3z" fill="#8cc4e0" /><path d="M3 5l3-3h12v12l-4 4M14 5l4-3" /></Ic>, "w-[22px]"],
  [<Caret className="text-[#777]" />, "w-[16px]"],
  [<Cube className="size-[20px] text-[#1b4a62]" fill="#6fb5da" />, "w-[24px]"],
  [<Caret className="text-[#777]" />, "w-[19px]"],
  [<Ic><path d="M1 10q9-9 18 0-9 8-18 0z" fill="#fff" /><circle cx="10" cy="10" r="3" fill="#333" /></Ic>, "w-[22px]"],
  [<Caret className="text-[#777]" />, "w-[18px]"],
  [<Ic className="size-5 text-[#aaa]"><circle cx="9" cy="9" r="7" fill="#ccc" /><path d="M8 17l8-8 2 2-8 8z" fill="#ddd" /></Ic>, "w-[26px]"],
  [<Ic className="size-5 text-[#aaa]"><circle cx="10" cy="8" r="6.500" fill="#ccc" /><path d="M3 12h14v6H3z" strokeDasharray="2 2" /></Ic>, "w-[22px]"],
  [<Caret className="text-[#777]" />, "w-[18px]"],
  [<Ic><path d="M1 3h18v11H1z" fill="#eee" /><path d="M10 14v4M6 18h8" /></Ic>, "w-[24px]"],
  [<Caret className="text-[#777]" />, "w-[12px]"],
];
function Viewport() {
  return (
    <div className="relative w-[1343px] h-[772px]">
      <div className="absolute left-[4px] top-[6px] h-[20px] flex items-center">
        <svg viewBox="0 0 5 8" className="w-[5px] h-[8px]"><path d="M0 0l5 4-5 4z" fill="#222" /></svg>
        <Part blue className="ml-[13px] size-[19px]" />
        <span className="ml-[4px] whitespace-pre">Robot Tortue  (Défaut&lt;&lt;...</span>
      </div>
      <div className="absolute left-[494px] top-[5px] h-[20px] flex items-center text-[#444]">
        {hud.map(([i, w], k) => <span key={k} className={w}>{i}</span>)}
      </div>
      <div className="absolute inset-0 font-['Liberation_Sans',Arial,sans-serif] text-[11px] leading-[15px] tracking-[-0.050px]">
        <div className="absolute left-[20px] top-[38px]">Max : 137.3700 deg<br />Min : 0.1600 deg</div>
        <div className="absolute left-[20px] top-[83px]">deg</div>
        <div className="absolute left-[21px] top-[107px] w-[20px] h-[545px] bg-[linear-gradient(to_bottom,#0018f0_0%,#0048f8_6%,#00f8f8_25%,#00f040_48%,#00e800_50%,#78f000_58%,#f0f000_75%,#f06000_93%,#f01000_100%)]" />
        <svg viewBox="0 0 15 18" className="absolute left-[6px] top-[98px] w-[15px] h-[18px]"><path d="M0 0l9 9-9 9z" fill="#0000f5" /><path d="M9 9.500h6" stroke="#000" /></svg>
        <svg viewBox="0 0 15 18" className="absolute left-[6px] top-[642px] w-[15px] h-[18px]"><path d="M0 0l9 9-9 9z" fill="#f50000" /><path d="M9 9.500h6" stroke="#000" /></svg>
        <div className="absolute left-[47px] top-[98px] h-[560px] flex flex-col justify-between">
          {legend.map((l) => <span key={l}>{l}</span>)}
        </div>
        <div className="absolute left-[584px] top-[38px] text-[#000080]">Modèle Transparent</div>
        <div className="absolute left-[1027px] top-[53px] whitespace-pre tracking-[-0.200px]">{"Type : Volumique\nÉlément : 104833\nNœud : 82145\nMatériau : : ABS\nProduit :   \"(P)  G\nConfiguration :"}</div>
        <div className="absolute left-[6px] top-[718px] text-[10px] text-[#008000]">Y</div>
        <div className="absolute left-[47px] top-[726px] text-[10px] text-[#e00000]">X</div>
        <div className="absolute left-[41px] top-[732px] text-[10px] text-[#0000e0]">Z</div>
      </div>
      <div className="absolute left-[-1px] top-[355px] w-[9px] h-[40px] bg-[#f7f7f7] border border-l-0 border-[#808080] flex items-center justify-center">
        <div className="size-[6px] rounded-full border border-[#999] bg-[#ccc]" />
      </div>
    </div>
  );
}

/* ---------- recommendations dialog ---------- */
const advice = ["Les lignes de soudure se", "forment lorsque deux ou", "plusieurs fronts de matière", "plastique fondue s'assemblent.", "Cela peut être causé par des", "surfaces d'arrêt de moules, les", "caractéristiques principales du", "moule, des points d'injection", "multiples ou des variations", "d'épaisseur de paroi qui", "provoquent une augmentation ou", "une stagnation la vitesse du front", "de matière. Ces lignes sont", "généralement plus faibles que", "les régions ne disposant pas de", "ligne de soudure et provoquent", "souvent des défauts d'ordre", "esthétique. Elles peuvent aussi", "jouer le rôle des concentrateurs", "de contraintes dans la pièce", "moulée. Les lignes de soudure", "forment généralement un angle"];
const advice2 = ["front de matière entre en contact", "avec le centre permanent d'une", "surface d'arrêt. Les lignes de", "soudure sont inévitables dans", "les pièces avec trous traversants", "ou points d'injection multiples.", "Donc, bien qu'il vous soit", "possible de déplacer le point", "d'injection pour modifier"];
const summary = ["Cette pièce peut être remplie avec", "succès avec une pression", "d'injection de  6.2 MPa (897.07", "psi).", "La pression d'injection requise", "pour le remplissage est inférieure", "à 66 % de la limite de pression", "d'injection spécifiée pour cette", "analyse, ce qui signifie que vous"];
function Dialog() {
  return (
    <div className="absolute left-[1366px] top-[4px] w-[231px] h-[778px] bg-[#f0f0f0] border border-[#8b8f96] shadow-[0_2px_14px_rgba(0,0,0,0.35)] flex flex-col">
      <div className="h-[30px] bg-white flex items-center pl-[8px] text-[#8f8f8f] shrink-0">
        <CycleP className="size-[16px] text-[#2a7fa8]" />
        <span className="ml-[5px] flex-1 text-[12px] tracking-[-0.330px]">Recommandations Résultats</span>
        <Ic className="size-[14px] mr-[8px] text-[#666]"><path d="M3 3l14 14M17 3L3 17" strokeWidth="1.600" /></Ic>
      </div>
      <div className="h-[41px] flex items-center pl-[9px] shrink-0">
        <div className="w-[56px] h-[14px] overflow-hidden flex justify-end"><span className="tracking-[-0.200px]">Recommandati</span></div>
        <div className="ml-[4px] w-[46px] h-[18px] border-2 border-[#888] bg-[#3c3c3c] flex items-center justify-around">
          <div className="size-[12px] rounded-full bg-[#8d5f5b]" /><div className="size-[12px] rounded-full bg-[#a5906a]" /><div className="size-[12px] rounded-full bg-radial from-[#7f7] to-[#0b0]" />
        </div>
      </div>
      <div className="mt-[-7px] ml-[11px] w-[205px] h-[128px] border border-[#777] bg-white p-px shrink-0">
        <div className="h-[124px] border-l border-t border-[#666] bg-[#f0f0f0] flex">
          <div className="w-[183px] pl-[4px] pt-[2px] text-[11px] whitespace-pre tracking-[-0.050px]">
            {summary.map((s) => <div key={s} className="h-[13px] leading-[13px]">{s}</div>)}
          </div>
          <div className="w-[17px] flex flex-col items-center pl-px">
            <div className="h-[17px] flex items-center"><Chev className="size-[8px] text-[#555]" /></div>
            <div className="h-[17px] w-[15px] bg-[#cdcdcd]" />
            <div className="mt-auto h-[18px] flex items-center"><Chev className="size-[8px] text-[#555] rotate-180" /></div>
          </div>
        </div>
      </div>
      <div className="mt-[4px] ml-[11px] w-[208px] h-[59px] bg-[#99ccff] border-b border-[#999] pl-[5px] pt-[22px] font-['DejaVu_Sans',sans-serif] font-bold text-[13px] leading-[16px] tracking-[-0.150px] shrink-0">
        Lignes de<br />soudure :
      </div>
      <div className="ml-[11px] flex h-[490px] w-[208px] shrink-0">
        <div className="w-[191px] bg-white overflow-hidden pl-[5px] pt-[6px] font-['Liberation_Sans',Arial,sans-serif] text-[12px] tracking-[0.160px] whitespace-nowrap">
          {advice.map((s) => <div key={s} className="h-[15px] leading-[15px]">{s}</div>)}
          <div className="h-[20px] leading-[23px]">de 180<span className="inline-block size-[7px] border border-black rounded-full mb-[4px]" /> opposé au point où le</div>
          {advice2.map((s) => <div key={s} className="h-[15px] leading-[15px]">{s}</div>)}
        </div>
        <div className="w-[17px] flex flex-col items-center">
          <div className="h-[34px] pt-[15px]"><Chev className="size-[12px] text-[#555]" /></div>
          <div className="h-[232px] w-[15px] bg-[#cdcdcd]" />
          <div className="mt-auto h-[27px]"><Chev className="size-[12px] text-[#555] rotate-180" /></div>
        </div>
      </div>
      <div className="ml-[11px] w-[200px] h-[19px] border-b-2 border-[#86b8ea] flex items-center pt-px shrink-0">
        <div className="w-[34px] flex justify-end pr-[7px]"><Chev className="size-[12px] text-[#555] -rotate-90" /></div>
        <div className="w-[122px] h-[15px] bg-[#cdcdcd]" />
        <Chev className="ml-[8px] size-[12px] text-[#555] rotate-90" />
      </div>
      <div className="ml-auto mr-[4px] size-[8px] border-r-2 border-b-2 border-dotted border-[#aaa]" />
    </div>
  );
}
function SideTabs() {
  const items = [
    <Ic><path d="M1 10 10 2l9 8" stroke="#2a7fa8" strokeWidth="2.500" /><path d="M4 10v8h12v-8M9 18v-5h3v5" /></Ic>,
    <Ic><path d="M2 6l4-3v13l-4 2zM7 6l4-3v13l-4 2zM12 6l4-3v13l-4 2z" fill="#eee" /></Ic>,
    <Ic><path d="M2 4h6l2 2h6v11H2z" fill="#eee" /><path d="M5 9h14l-3 8" /></Ic>,
    <Ic><path d="M2 2h16v16H2z" fill="#fff" /><path d="M5 5h4v4H5zM11 5h4v4h-4zM5 12h4v3H5z" fill="#f2c52f" /></Ic>,
    <Ball className="size-[19px]" />,
    <Ic><path d="M2 2h16v16H2z" fill="#fff" /><path d="M2 2h16v3H2z" fill="#4ea5cf" /><path d="M5 8h10M5 11h10M5 14h10" /></Ic>,
  ];
  return (
    <div className="absolute left-[1584px] top-[50px] w-[28px]">
      {items.map((x, i) => (
        <div key={i} className={"h-[24px] flex items-center pl-[4px] text-[#333] " + (i === 4 ? "bg-[#f7f7f7]" : "bg-[#d6d6d6] border-t border-b border-r border-[#888]")}>{x}</div>
      ))}
    </div>
  );
}

/* ---------- right task pane ---------- */
const TreeRow = ({ icon, t }: { icon: React.ReactNode; t: string }) => (
  <div className="h-[22px] flex items-center pl-[10px]">
    <Chev className="size-[9px] text-[#999] rotate-90 mt-[3px]" />
    <span className="w-[20px] ml-[9px] flex justify-center">{icon}</span>
    <span className="ml-[5px] tracking-[-0.100px]">{t}</span>
  </div>
);
function TaskPane() {
  return (
    <div className="w-[308px] h-[809px] bg-[#f7f7f7] border-l border-[#808080] shrink-0">
      <div className="h-[22px] bg-[#abacb0] border-b border-black flex items-center px-[9px]">
        <svg viewBox="0 0 12 10" className="w-[12px] h-[10px]" fill="none" stroke="#222" strokeWidth="2"><path d="M5.500 1 1.500 5l4 4M11 1 7 5l4 4" /></svg>
        <b className="flex-1 text-center pl-[4px] tracking-[-0.250px]">Apparences, scènes et décalques</b>
        <Pin className="text-[#222] -mr-[5px]" />
      </div>
      <div className="h-[33px] ml-[3px] border-b border-[#aaa] flex items-center text-[#c4c4c4]">
        <Ic className="size-[17px] ml-[6px]"><circle cx="10" cy="10" r="8.500" /><path d="M4.500 10 9 6v2.500h6v3H9V14z" fill="#c4c4c4" stroke="none" /></Ic>
        <Ic className="size-[17px] ml-[10px]"><circle cx="10" cy="10" r="8.500" /><path d="M15.500 10 11 6v2.500H5v3h6V14z" fill="#c4c4c4" stroke="none" /></Ic>
        <Caret className="ml-[11px] text-[#666]" />
        <Ic className="ml-[8px]"><circle cx="8" cy="8" r="6.500" fill="#ccc" /><path d="M9 18l8-9 2 2-7 8z" fill="#eee" /></Ic>
        <Ic className="ml-[7px]"><path d="M1 3h6M4 0v6M5 7l4-3v13l-4 2zM10 7l4-3v13l-4 2zM15 7l4-3v13l-4 2z" /></Ic>
        <Ic className="ml-[7px]"><path d="M1 3h6M4 0v6M4 18V8h5l2 2h6v3M4 18l3-6h12l-3 6z" /></Ic>
        <Ic className="ml-[6px]"><path d="M3 9Q3 4 9 4q4 0 6 2M17 11q-1 5-7 5-4 0-6-2" stroke="#2a7fa8" strokeWidth="3.500" /><path d="M18 1v8h-7zM2 19v-8h7z" fill="#1c6f99" stroke="none" /></Ic>
        <Ic className="size-[17px] ml-[9px]"><path d="M10 2l5 6h-3v10H8V8H5z" fill="#ddd" /></Ic>
      </div>
      <div className="h-[7px]" />
      <TreeRow icon={<Ball className="size-[17px]" />} t="Apparences(color)" />
      <TreeRow icon={<svg viewBox="0 0 20 20" className="size-[20px]"><path d="M0 10h20v10H0z" fill="#222" /><path d="M2 12h3v3H2zM15 12h3v3h-3zM5 16h3v3H5zM12 16h3v3h-3z" fill="#fff" /><circle cx="10" cy="9" r="7.500" fill="#2f6fd6" /><path d="M10 1.500a7.500 7.500 0 0 1 7.500 7.500H10z" fill="#e0221b" /><path d="M17.500 9a7.500 7.500 0 0 1-7.500 7.500V9z" fill="#efc32b" /><path d="M2.500 9H10v7.500A7.500 7.500 0 0 1 2.500 9z" fill="#18a02a" /></svg>} t="Scènes" />
      <TreeRow icon={<Ic className="size-[18px] text-[#444]"><path d="M3 4v12q7 4 14 0V4" fill="#eee" /><ellipse cx="10" cy="4" rx="7" ry="2.500" fill="#fff" /><path d="M6 9h8v6H6z" fill="#4ea5cf" stroke="#333" strokeWidth=".8" /></Ic>} t="Décalques" />
      <div className="mt-[132px] ml-[4px] h-[6px] border-t-2 border-b-2 border-t-[#9aa0b4] border-b-[#666c80] bg-[#d6d9e2]" />
      <div className="mt-[5px] ml-[8px] w-[296px] h-[60px] border border-black bg-[#ffff80] text-center pt-[2px] leading-[18px]">Sélectionnez des objets à glisser et déposer.</div>
      <div className="mt-[5px] ml-[4px] h-[6px] border-t-2 border-b-2 border-t-[#9aa0b4] border-b-[#666c80] bg-[#d6d9e2] flex justify-center gap-[3px]">
        <Caret className="text-black rotate-180" /><Caret className="text-black rotate-180" /><Caret className="text-black rotate-180" />
      </div>
    </div>
  );
}

/* ---------- bottom bars ---------- */
const Funnel = () => <path d="M11.500 12.500h8l-3 3V20h-2v-4.500z" fill="#9a5bb5" stroke="none" />;
const filters: React.ReactNode[] = [
  <circle cx="7" cy="8" r="2.500" fill="#2a7fa8" />,
  <path d="M8 0v18" stroke="#2a7fa8" strokeWidth="2" />,
  <path d="M2 2h14v13H2z" fill="#4ea5cf" stroke="#1b4a62" />,
  <path d="M1 10Q2 4 7 7l5-6q2 4 6 3-1 6-5 6l-5 7q-3-4-7-2z" fill="#4ea5cf" stroke="#1b4a62" />,
  <><path d="M2 5l8-4 6 3v11l-7 4-7-3z" fill="#4ea5cf" stroke="#1b4a62" /><path d="M2 5l7 3 7-4M9 8v11" stroke="#1b4a62" /></>,
  <path d="M2 18 16 2" stroke="#2a7fa8" strokeWidth="1.600" strokeDasharray="4 2" />,
  <path d="M3 4l5-2v14l-5 2zM10 4l5-2v14l-5 2z" fill="#8cc4e0" stroke="#1b4a62" />,
  <rect x="4" y="6" width="5" height="5" fill="#4ea5cf" stroke="#1b4a62" />,
  <path d="M14 2H2v11q0 3 4 3h6" stroke="#2a7fa8" strokeWidth="2" />,
  <><path d="M4 4v14M4 4h12" stroke="#333" /><path d="M2 2h4v4H2zM14 2h4v4h-4zM2 15h4v4H2z" fill="#8cc4e0" stroke="#333" /></>,
  <><path d="M1 18 16 2" stroke="#2a7fa8" strokeWidth="1.600" /><rect x="6" y="8" width="4" height="4" fill="#8cc4e0" stroke="#333" /></>,
  <><circle cx="9" cy="10" r="5" stroke="#2a7fa8" strokeWidth="1.800" /><circle cx="9" cy="10" r="1.800" fill="#333" /><path d="M9 1v4M9 15v4M0 10h4M14 10h4" stroke="#333" /></>,
  <><path d="M4 1v18M7 4h9v10H7z" stroke="#444" /><path d="M1 9h17" stroke="#2a7fa8" /></>,
  <><path d="M3 9l6-6 5 5-6 7z" stroke="#333" strokeWidth="1.800" /><path d="M2 6l5 8M9 4l4-2" stroke="#333" /></>,
  <path d="M1 11l4 7L10 2h8" stroke="#333" strokeWidth="1.800" />,
  <><path d="M1 3h17v8H1zM9 3v8" stroke="#333" /><path d="M3 9l2-4 2 4zM12 5v4M15 5v4" stroke="#333" /></>,
  <><circle cx="10" cy="7" r="6" stroke="#444" /><path d="M8 10V4l4 6V4M6 12l-4 6" stroke="#333" /></>,
  <><path d="M3 1h13v13H3z" fill="#fff" stroke="#333" strokeWidth="1.600" /><path d="M6 12l3.500-9 3.500 9M7 9h5M9 14v5" stroke="#222" strokeWidth="1.600" /></>,
  <path d="M1 17l5-10 3 5 4-8h6M3 7h6M9 12l4-5" stroke="#333" strokeWidth="1.500" />,
  <path d="M3 1v9h8L3 1M1 13h14M2 19l3-5M6 19l3-5M10 19l3-5" stroke="#444" />,
  <><circle cx="10" cy="7" r="6" stroke="#444" /><path d="M7 10l3-6 3 6M5 12l-3 5M4 15h9" stroke="#333" /></>,
  <path d="M5 1h9v13l-4.500 5L5 14zM5 4h9M5 10h9M8 4v8M11 4v8" stroke="#555" />,
  <><path d="M2 2h14v16H2z" stroke="#555" /><path d="M5 14l3-9 3 9M6 11h4" stroke="#333" /><circle cx="13" cy="5" r="1.500" stroke="#333" /></>,
  <><circle cx="9" cy="9" r="7.500" fill="#fff" stroke="#222" /><path d="M9 1.500A7.500 7.500 0 0 1 16.500 9H9zM9 16.500A7.500 7.500 0 0 1 1.500 9H9z" fill="#222" /></>,
  <><path d="M0 6h10" stroke="#333" strokeWidth="1.600" /><path d="M9 2h8v8H9z" fill="#4ea5cf" stroke="#1b4a62" /></>,
  <><path d="M0 6h19" stroke="#333" strokeWidth="1.600" /><path d="M6 2h8v8H6z" fill="#4ea5cf" stroke="#1b4a62" /></>,
  <><path d="M2 3h14v12H2z" fill="#4ea5cf" stroke="#1b4a62" /><path d="M8 12l5-10 5 10zM10 8h6M13 2v10" fill="#fff" stroke="#333" /></>,
];
const extraFilters = [
  <><path d="M1 0v19" stroke="#2a7fa8" strokeWidth="2" /><path d="M6 12l5-10 5 10zM8 8h6M11 2v10" fill="#fff" stroke="#333" /></>,
  <><circle cx="2" cy="6" r="2" fill="#2a7fa8" /><path d="M6 12l5-10 5 10zM8 8h6M11 2v10" fill="#fff" stroke="#333" /></>,
];
function SheetTabs() {
  return (
    <div className="relative h-[15px] bg-[#f7f7f7] border-t border-[#808080] flex shrink-0 leading-[12px]">
      <div className="ml-[2px] w-[65px] bg-[#999] border-t border-black flex justify-around text-[#777]">
        {["|◂", "◂", "▸", "▸|"].map((s) => <span key={s} className="w-[15px] text-[9px] leading-[11px] text-center border border-[#777] bg-[#a8a8a8]">{s}</span>)}
      </div>
      <b className="w-[65px] text-center border-r border-[#808080] tracking-[0px]">Modèle</b>
      <span className="w-[62px] text-center bg-[#d2d2d2] border-r border-[#808080]">Vues 3D</span>
      <span className="w-[153px] pl-[10px] bg-[#d2d2d2] border-r border-[#808080]">Etude de mouvement 1</span>
    </div>
  );
}
const StackedFunnels = () => (
  <>
    <path d="M1 1h11L8.500 5v6h-3V5z" /><path d="M4 4.500h11L11.500 8.500v6h-3v-6z" /><path d="M7 8h11l-3.500 4v7h-3v-7z" />
  </>
);
function FilterBar() {
  return (
    <div className="h-[34px] border-b border-[#808080] flex items-center shrink-0">
      <Grip className="ml-[4px] h-[26px]" />
      <Filter className="ml-[13px] size-[13px] text-[#bbb]" strokeWidth={1.500} />
      <div className="ml-[11px] w-[20px]"><Ic className="size-5 text-[#bbb] fill-[#eee]"><StackedFunnels /></Ic></div>
      <div className="ml-[7px] w-[20px]"><Ic className="size-5 text-[#6a2a80] fill-[#e6c6f0]"><StackedFunnels /></Ic></div>
      <Ic className="size-[20px] ml-[6px] text-[#bbb]"><path d="M5 1v15l3.500-3.500 2.500 6 2.500-1-2.500-6H16z" fill="#f4f4f4" /></Ic>
      <Caret className="ml-[8px] text-[#999]" />
      <Ic className="size-[20px] ml-[9px] text-[#aaa]"><path d="M2 1v13l3-3 2 5 2-1-2-5h4z" fill="#ddd" /><path d="M7 2v15l3.500-3.500 2.500 6 2.500-1-2.500-6H18z" fill="#ccc" /></Ic>
      <div className="w-px h-[26px] ml-[6px] bg-[#999]" />
      <div className="ml-[10px] flex">
        {filters.map((f, i) => <span key={i} className="w-[27px]"><Ic>{f}<Funnel /></Ic></span>)}
      </div>
      <div className="ml-[3px] flex">
        {extraFilters.map((f, i) => <span key={i} className="w-[26px]"><Ic>{f}<Funnel /></Ic></span>)}
      </div>
      <div className="w-px h-[30px] ml-[2px] bg-[#999]" />
    </div>
  );
}
function StatusBar() {
  return (
    <div className="h-[18px] flex items-center shrink-0">
      <span className="pl-[2px] w-[1600px] tracking-[-0.200px]">Terminé</span>
      <div className="w-[9px] h-[16px] border-l border-r border-[#d4d4d4]" />
      <span className="w-[81px] h-[16px] leading-[16px] pl-[3px] border-r border-[#d4d4d4]">Edition: Pièce</span>
      <div className="w-[16px] h-[16px] border-r border-[#d4d4d4]" />
      <span className="ml-[50px] w-[72px] text-[#a8a8a8]">MMGS</span>
      <Caret className="text-[#888] rotate-180" />
      <Ic className="ml-[66px] size-[17px] text-[#444]"><path d="M1 7l8-5 10 5-1 6-8 5L2 12z" fill="#ddd" /><path d="M1 7l9 5 9-5M10 12v6" /><circle cx="10" cy="7" r="2" /></Ic>
    </div>
  );
}
function Taskbar() {
  return (
    <div className="h-[40px] bg-[#1f3334] flex shrink-0 text-white">
      <div className="w-[48px] flex items-center justify-center">
        <svg viewBox="0 0 16 16" className="size-[16px]"><path d="M0 2.200 7 1.200v6.300H0zM8 1 16 0v7.500H8zM0 8.500h7v6.300L0 13.800zM8 8.500h8V16l-8-1z" fill="#fff" /></svg>
      </div>
      <div className="w-[344px] bg-[#f2f2f2] border border-[#ccc] flex items-center pl-[11px] text-[#333]">
        <Search className="size-[17px] -scale-x-100 text-[#222]" strokeWidth={1.800} />
        <span className="ml-[11px] mt-px text-[14.500px] tracking-[-0.240px]">Tapez ici pour effectuer une recherche</span>
      </div>
      <div className="ml-[56px] w-[40px] border-b-[3px] border-[#76b9ed] flex items-center justify-center">
        <svg viewBox="0 0 22 20" className="w-[22px] h-[20px]"><path d="M0 2h8l2 2h12v15H0z" fill="#f6c445" /><path d="M0 7h22v12H0z" fill="#fddc7a" /><path d="M5 19v-7h12v7h-4v-3H9v3z" fill="#3f9be0" /></svg>
      </div>
      <div className="ml-[9px] w-[40px] border-b-[3px] border-[#76b9ed] flex items-center justify-center">
        <svg viewBox="0 0 20 22" className="w-[20px] h-[22px]"><path d="M1 0h12l6 6v16H1z" fill="#fff" /><path d="M13 0h6v6z" fill="#1779b8" /><path d="M4 6h7M4 9h12M4 15h12M4 18h12" stroke="#1779b8" strokeWidth="1.500" /><path d="M4 11h5v3H4zM11 11h5v3h-5z" fill="#1779b8" /></svg>
      </div>
      <div className="ml-[5px] w-[48px] bg-[#495b5c] border-b-[3px] border-[#76b9ed] flex items-center justify-center">
        <div className="w-[23px] h-[23px] bg-linear-to-br from-[#e8262e] to-[#7d0a10] rounded-[3px] text-center font-bold leading-[11px] pt-px">
          <div className="text-[10px] tracking-[1px]">SW</div><div className="text-[8px]">2018</div>
        </div>
      </div>
      <div className="ml-auto flex items-center">
        <Ic className="w-[18px] h-[20px]"><path d="M5 6h8v12H5zM7 6V2h4v4M13 14l2 3 4-5" /></Ic>
        <svg viewBox="0 0 18 18" className="size-[17px] ml-[5px]"><circle cx="8.500" cy="8.500" r="8" fill="#1d6fb8" /><path d="M2 10l3-4 2 6 3-8 2 6 3-2" fill="none" stroke="#fff" /><path d="M10 10h8v8h-8z" fill="#2fa84a" /><path d="M11.500 14l2 2 3-4" fill="none" stroke="#fff" /></svg>
        <div className="ml-[7px] flex items-end"><span className="w-[13px] h-[13px] bg-[#c81c22] text-[8px] leading-[12px] font-bold text-center">SW</span><b className="text-[#ffe600] text-[14px] leading-[14px]">!</b></div>
        <svg viewBox="0 0 18 14" className="w-[17px] h-[14px] ml-[7px]"><path d="M1 4v5q8 8 16 0V4z" fill="#b36a1a" /><ellipse cx="9" cy="5" rx="8" ry="4" fill="#6d3f14" /></svg>
        <svg viewBox="0 0 18 18" className="size-[17px] ml-[7px]"><path d="M1 1h10v7H1zM7 8h10v7H7z" fill="#3fe0f0" stroke="#000" /><path d="M13 2l3 3M2 11h4v4" stroke="#d8c020" fill="none" /></svg>
        <svg viewBox="0 0 16 16" className="size-[16px] ml-[7px]"><circle cx="8" cy="8" r="7.500" fill="#f2f2f2" /><path d="M2 8q6-6 12 0-6 6-12 0z" fill="#444" /><circle cx="8" cy="8" r="2" fill="#fff" /></svg>
        <Ic className="size-[18px] ml-[7px]"><path d="M5 4h14v10H7M12 14v4M8 18h8M1 2h5v6H1zM3 8v10" /></Ic>
        <svg viewBox="0 0 18 18" className="size-[17px] ml-[6px]"><path d="M1 6h3l4-4v13l-4-4H1z" fill="none" stroke="#fff" /><circle cx="12.500" cy="12" r="5" fill="#d9222a" /><path d="M10.500 10l4 4M14.500 10l-4 4" stroke="#fff" /></svg>
        <div className="w-[76px] text-center leading-[18px]">09:44<br />28/05/2021</div>
        <Ic className="w-[18px] h-[18px] ml-[9px]"><path d="M1.500 2h17v13h-6L10 18l-2.500-3h-6z" /></Ic>
        <div className="w-px h-[40px] bg-[#6a7878] ml-[19px] mr-[4px]" />
      </div>
    </div>
  );
}

export default function App() {
  return (
    <div className="w-[1920px] h-[1080px] overflow-hidden flex flex-col bg-[#f7f7f7] text-black font-['Open_Sans',sans-serif] text-[11.500px] leading-[14px] whitespace-nowrap tracking-[-0.100px]">
      <TitleBar />
      <ExtraBars />
      <Ribbon />
      <div className="flex h-[809px] shrink-0">
        <div className="relative w-[1612px] h-[809px] bg-[#c4c8d3] flex flex-col">
          <Model />
          <TabRow />
          <div className="flex h-[772px]">
            <LeftPanel />
            <Viewport />
            <div className="w-[3px] bg-[#f7f7f7] border-l border-white" />
          </div>
          <SheetTabs />
          <SideTabs />
          <Dialog />
        </div>
        <TaskPane />
      </div>
      <FilterBar />
      <StatusBar />
      <Taskbar />
    </div>
  );
}
